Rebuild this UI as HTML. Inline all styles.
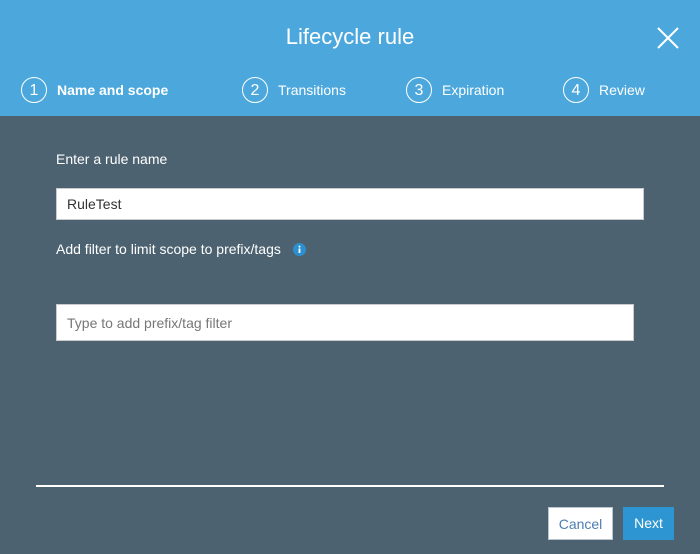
<!DOCTYPE html>
<html><head><meta charset="utf-8"><style>
*{margin:0;padding:0;box-sizing:border-box}
body{width:700px;height:554px;background:#4d6270;font-family:"Liberation Sans",sans-serif;position:relative;overflow:hidden;color:#fff}
.hdr{position:absolute;left:0;top:0;width:700px;height:116px;background:#4ca8dc}
.t{position:absolute;top:24px;left:0;width:700px;text-align:center;font-size:22px}
.x{position:absolute;left:656px;top:26px}
.step{position:absolute;top:77px;font-size:14px;display:flex;align-items:center}
.c{width:26px;height:26px;border:1.5px solid #fff;border-radius:50%;display:flex;align-items:center;justify-content:center;font-size:16px;margin-right:10px;padding-top:1px}
.lbl{position:absolute;font-size:14px}
.in{position:absolute;background:#fff;border:1px solid #c8ccd0;font-size:14px;padding-left:10px;color:#333}
.line{position:absolute;left:36px;top:485px;width:628px;height:2px;background:#fff}
.btn{position:absolute;top:507px;height:33px;font-size:14px;text-align:center;line-height:32px}
</style></head><body>
<div class="hdr">
<div class="t">Lifecycle rule</div>
<svg class="x" width="24" height="24" viewBox="0 0 24 24"><path d="M2 2L22 22M22 2L2 22" stroke="#fff" stroke-width="2"/></svg>
<div class="step" style="left:21px"><div class="c">1</div><b>Name and scope</b></div>
<div class="step" style="left:242px"><div class="c">2</div>Transitions</div>
<div class="step" style="left:406px"><div class="c">3</div>Expiration</div>
<div class="step" style="left:563px"><div class="c">4</div>Review</div>
</div>
<div class="lbl" style="left:56px;top:151px">Enter a rule name</div>
<div class="in" style="left:56px;top:188px;width:588px;height:32px;line-height:30px">RuleTest</div>
<div class="lbl" style="left:56px;top:241px">Add filter to limit scope to prefix/tags</div>
<svg style="position:absolute;left:293px;top:243px" width="13" height="13" viewBox="0 0 13 13"><circle cx="6.5" cy="6.5" r="6.5" fill="#2e8fd0"/><rect x="5.6" y="5.5" width="1.8" height="4.5" fill="#fff"/><circle cx="6.5" cy="3.6" r="1" fill="#fff"/></svg>
<div class="in" style="left:56px;top:304px;width:578px;height:37px;line-height:36px;color:#777">Type to add prefix/tag filter</div>
<div class="line"></div>
<div class="btn" style="left:548px;width:65px;background:#fff;color:#4a7fb0;border:1px solid #b9c5cf">Cancel</div>
<div class="btn" style="left:623px;width:51px;background:#2e95d3;color:#fff">Next</div>
</body></html>
